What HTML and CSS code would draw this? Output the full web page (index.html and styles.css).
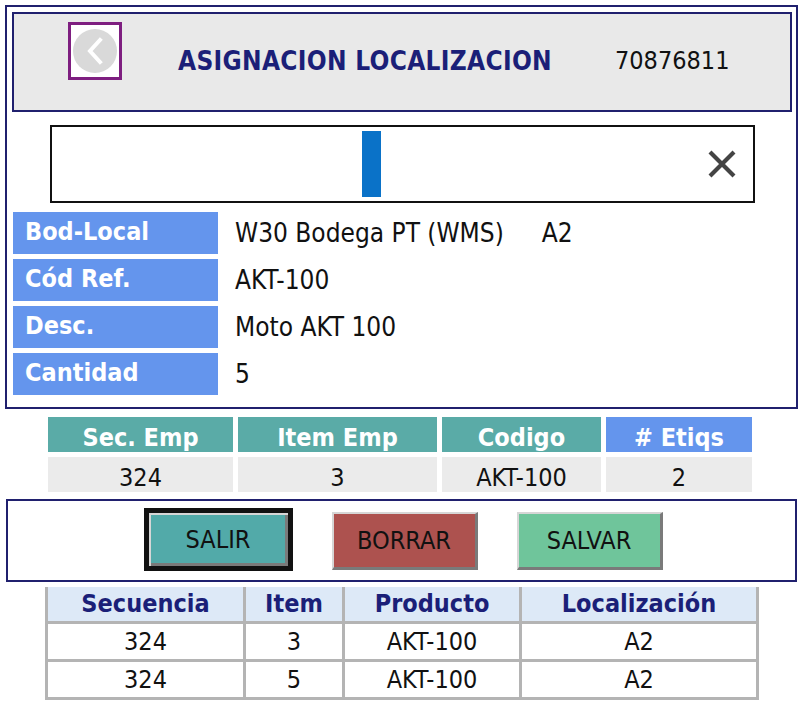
FILE: index.html
```html
<!DOCTYPE html>
<html lang="es">
<head>
<meta charset="utf-8">
<title>Asignacion Localizacion</title>
<link rel="stylesheet" href="styles.css">
</head>
<body>
<div class="frame">
  <div class="header">
    <button class="back" type="button" aria-label="Volver">
      <svg width="48" height="50" viewBox="0 0 48 50">
        <circle cx="24" cy="25" r="22" fill="#d9d9d9"/>
        <path d="M29 14 L19 25 L29 36" fill="none" stroke="#ffffff" stroke-width="4" stroke-linecap="square"/>
      </svg>
    </button>
    <h1 class="title">ASIGNACION LOCALIZACION</h1>
    <span class="doc-num">70876811</span>
  </div>

  <div class="search">
    <span class="caret"></span>
    <svg class="clear" width="30" height="30" viewBox="0 0 30 30">
      <path d="M3 3 L27 27 M27 3 L3 27" stroke="#444444" stroke-width="4.2" fill="none"/>
    </svg>
  </div>

  <div class="info">
    <div class="info-row"><div class="label">Bod-Local</div><div class="value">W30 Bodega PT (WMS)<span class="loc">A2</span></div></div>
    <div class="info-row"><div class="label">Cód Ref.</div><div class="value">AKT-100</div></div>
    <div class="info-row"><div class="label">Desc.</div><div class="value">Moto AKT 100</div></div>
    <div class="info-row"><div class="label">Cantidad</div><div class="value">5</div></div>
  </div>
</div>

<div class="emp">
  <div class="emp-head">Sec. Emp</div>
  <div class="emp-head">Item Emp</div>
  <div class="emp-head">Codigo</div>
  <div class="emp-head alt">#&nbsp;Etiqs</div>
  <div class="emp-cell">324</div>
  <div class="emp-cell">3</div>
  <div class="emp-cell">AKT-100</div>
  <div class="emp-cell">2</div>
</div>

<div class="actions">
  <button class="btn btn-exit" type="button">SALIR</button>
  <button class="btn btn-delete" type="button">BORRAR</button>
  <button class="btn btn-save" type="button">SALVAR</button>
</div>

<table class="grid">
  <colgroup>
    <col class="c1"><col class="c2"><col class="c3"><col class="c4">
  </colgroup>
  <thead>
    <tr><th>Secuencia</th><th>Item</th><th>Producto</th><th>Localización</th></tr>
  </thead>
  <tbody>
    <tr><td>324</td><td>3</td><td>AKT-100</td><td>A2</td></tr>
    <tr><td>324</td><td>5</td><td>AKT-100</td><td>A2</td></tr>
  </tbody>
</table>
</body>
</html>
```

FILE: styles.css
```css
* {
  box-sizing: border-box;
}

body {
  margin: 0;
  background: #ffffff;
  font-family: "DejaVu Sans Condensed", "DejaVu Sans", sans-serif;
  color: #111111;
}

/* main frame with header, scanner input and info rows */
.frame {
  margin: 5px 0 0 5px;
  width: 793px;
  border: 2px solid #20206e;
  padding: 5px 4px 12px 5px;
}

.header {
  display: flex;
  align-items: center;
  height: 100px;
  border: 2px solid #20206e;
  background: #e9e9e9;
  padding-left: 54px;
}

.back {
  width: 54px;
  height: 58px;
  margin-bottom: 22px;
  padding: 0;
  border: 3px solid #7e1e80;
  background: #ffffff;
  display: flex;
  align-items: center;
  justify-content: center;
}

.title {
  margin: 0 0 2px 56px;
  font-size: 26px;
  letter-spacing: 0.3px;
  font-weight: bold;
  color: #1b1f78;
  line-height: 30px;
}

.doc-num {
  margin: 0 0 2px 63px;
  font-size: 25px;
  line-height: 30px;
  color: #111111;
}

.search {
  display: flex;
  align-items: center;
  margin: 13px 0 0 38px;
  width: 705px;
  height: 78px;
  border: 2px solid #111111;
  background: #ffffff;
}

.caret {
  width: 19px;
  height: 66px;
  margin-left: 310px;
  background: #0a72c8;
}

.clear {
  margin-left: auto;
  margin-right: 16px;
}

.info {
  display: flex;
  flex-direction: column;
  gap: 5px;
  margin-top: 9px;
}

.info-row {
  display: flex;
  height: 42px;
  align-items: center;
}

.label {
  width: 205px;
  height: 42px;
  margin-left: 1px;
  background: #6495ed;
  color: #ffffff;
  font-weight: bold;
  font-size: 25px;
  line-height: 40px;
  padding-left: 12px;
}

.value {
  margin-left: 17px;
  font-size: 26px;
  line-height: 40px;
}

.loc {
  margin-left: 38px;
}

/* package summary */
.emp {
  display: grid;
  grid-template-columns: 185px 199px 159px 146px;
  grid-template-rows: 35px 35px;
  column-gap: 5px;
  row-gap: 5px;
  margin: 8px 0 0 48px;
  width: 704px;
}

.emp-head {
  background: #5aaba7;
  color: #ffffff;
  font-weight: bold;
  font-size: 25px;
  text-align: center;
  line-height: 41px;
  overflow: hidden;
}

.emp-head.alt {
  background: #6495ed;
}

.emp-cell {
  background: #ebebeb;
  font-size: 25px;
  text-align: center;
  line-height: 41px;
}

/* action buttons */
.actions {
  display: flex;
  justify-content: center;
  align-items: center;
  gap: 39px;
  margin: 7px 0 0 6px;
  width: 791px;
  height: 83px;
  border: 2px solid #20206e;
  padding-left: 3px;
}

.btn {
  width: 146px;
  height: 58px;
  font-family: inherit;
  font-size: 25px;
  color: #111111;
  border-style: solid;
  border-width: 2px 3px 3px 2px;
  border-color: #d6d6d6 #7a7a7a #7a7a7a #d6d6d6;
  padding: 0;
  margin-top: 1px;
}

.btn-exit {
  width: 149px;
  height: 63px;
  margin-top: -3px;
  border: 5px solid #111111;
  box-shadow: inset 2px 2px 0 #d6d6d6, inset -3px -3px 0 #7a7a7a;
  background: #52aaa9;
}

.btn-delete {
  background: #ad524f;
}

.btn-save {
  background: #6fc59b;
}

/* history grid */
.grid {
  margin: 5px 0 0 45px;
  width: 711px;
  border-collapse: collapse;
  table-layout: fixed;
  font-size: 25px;
}

.c1 { width: 198px; }
.c2 { width: 99px; }
.c3 { width: 177px; }
.c4 { width: 237px; }

.grid th {
  height: 35px;
  background: #dde9f7;
  color: #1b1f78;
  font-weight: bold;
  padding: 0;
  border-left: 3px solid #b4b4b4;
  border-right: 3px solid #b4b4b4;
  border-bottom: 3px solid #b4b4b4;
  line-height: 34px;
}

.grid td {
  height: 37px;
  text-align: center;
  padding: 0;
  border: 3px solid #b4b4b4;
  line-height: 35px;
}
```
